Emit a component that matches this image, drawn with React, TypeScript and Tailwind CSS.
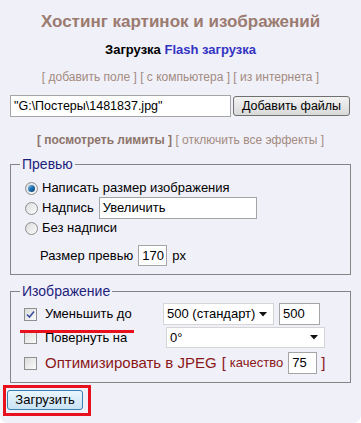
import React from "react";

function Radio({ checked }: { checked?: boolean }) {
  return (
    <span className="flex h-[13px] w-[13px] shrink-0 items-center justify-center rounded-full border border-[#8e8f8f] bg-gradient-to-br from-[#dcdcdc] to-[#fbfbfb]">
      {checked && (
        <span className="h-[7px] w-[7px] rounded-full bg-gradient-to-br from-[#7ec3ee] via-[#1f6fb0] to-[#0b3f73]" />
      )}
    </span>
  );
}

function Check({ checked }: { checked?: boolean }) {
  return (
    <span className="flex h-[13px] w-[13px] shrink-0 items-center justify-center border border-[#8e8f8f] bg-gradient-to-br from-[#dcdcdc] to-[#fbfbfb]">
      {checked && (
        <svg width="9" height="9" viewBox="0 0 9 9">
          <path d="M1 4.5 L3.5 7 L8 1.5" fill="none" stroke="#3a4fa0" strokeWidth="1.6" />
        </svg>
      )}
    </span>
  );
}

function Select({ value, w }: { value: string; w: string }) {
  return (
    <div className={`flex items-center justify-between whitespace-nowrap border border-[#d5d5d5] bg-white pl-[3px] pr-[6px] text-black ${w}`}>
      <span>{value}</span>
      <svg width="8" height="5" viewBox="0 0 8 5">
        <path d="M0 0 H8 L4 4.5 Z" fill="#111" />
      </svg>
    </div>
  );
}

export default function App() {
  return (
    <div className="h-[423px] w-[361px] bg-white font-['Liberation_Sans',Arial,sans-serif] text-[13px] text-black">
      <div className="relative h-full rounded-b-[8px] bg-[#f0f0f9] pt-[12px]">
        <h1 className="h-[20px] text-center text-[17px] font-bold leading-[20px] text-[#9b7b70]">
          Хостинг картинок и изображений
        </h1>
        <div className="mt-[10px] h-[16px] text-center font-bold leading-[16px]">
          Загрузка <span className="text-[#3434c2]">Flash загрузка</span>
        </div>
        <div className="mt-[11px] h-[16px] text-center text-[12px] leading-[16px] text-[#a38b80]">
          [ добавить поле ] [ с компьютера ] [ из интернета ]
        </div>

        <div className="mt-[10px] flex h-[22px] items-center pl-[10px]">
          <div className="flex h-[22px] w-[221px] items-center whitespace-nowrap border border-[#a5a5a5] bg-white pl-[3px] text-[12.5px]">
            "G:\Постеры\1481837.jpg"
          </div>
          <button className="ml-[2px] h-[20px] w-[117px] rounded-[3px] border border-[#707070] bg-gradient-to-b from-[#f3f3f3] to-[#d9d9d9] text-[12.5px] leading-[18px]">
            Добавить файлы
          </button>
        </div>

        <div className="mt-[15px] h-[16px] text-center text-[12px] leading-[16px] text-[#a38b80]">
          <span className="font-bold text-[#8d7469]">[ посмотреть лимиты ]</span> [ отключить все эффекты ]
        </div>

        <fieldset className="mx-[10px] mt-[8px] border border-[#858585] pb-[8px]">
          <legend className="ml-[9px] px-[2px] text-[14px] leading-[16px] text-[#1e1e7c]">Превью</legend>
          <div className="pl-[14px]">
            <div className="mt-[6px] flex h-[20px] items-center gap-[4px]">
              <Radio checked />
              <span>Написать размер изображения</span>
            </div>
            <div className="flex h-[20px] items-center gap-[4px]">
              <Radio />
              <span>Надпись</span>
              <div className="ml-[1px] flex h-[22px] w-[158px] items-center border border-[#a5a5a5] bg-white pl-[3px]">
                Увеличить
              </div>
            </div>
            <div className="flex h-[20px] items-center gap-[4px]">
              <Radio />
              <span>Без надписи</span>
            </div>
            <div className="mt-[7px] flex h-[21px] items-center pl-[15px]">
              <span>Размер превью</span>
              <div className="ml-[5px] flex h-[21px] w-[29px] items-center border border-[#a5a5a5] bg-white pl-[3px]">
                170
              </div>
              <span className="ml-[5px]">px</span>
            </div>
          </div>
        </fieldset>

        <fieldset className="relative mx-[10px] mt-[8px] border border-[#858585] pb-[8px]">
          <legend className="ml-[9px] px-[2px] text-[14px] leading-[16px] text-[#1e1e7c]">Изображение</legend>
          <div className="pl-[13px]">
            <div className="mt-[4px] flex h-[22px] items-center">
              <Check checked />
              <span className="ml-[8px] w-[118px]">Уменьшить до</span>
              <Select value="500 (стандарт)" w="h-[22px] w-[111px]" />
              <div className="ml-[5px] flex h-[22px] w-[41px] items-center border border-[#a5a5a5] bg-white pl-[3px]">
                500
              </div>
            </div>
            <div className="mt-[2px] flex h-[21px] items-center">
              <Check />
              <span className="ml-[8px] w-[121px]">Повернуть на</span>
              <Select value="0°" w="h-[21px] w-[159px]" />
            </div>
            <div className="mt-[4px] flex h-[22px] items-center text-[15px] text-[#8a1717]">
              <Check />
              <span className="ml-[8px] whitespace-nowrap">Оптимизировать в JPEG</span>
              <span className="ml-[5px]">[</span>
              <span className="ml-[4px] text-[13px]">качество</span>
              <div className="ml-[5px] flex h-[22px] w-[29px] items-center border border-[#a5a5a5] bg-white pl-[3px] text-[13px] text-black">
                75
              </div>
              <span className="ml-[4px]">]</span>
            </div>
          </div>
          <div className="absolute left-[9px] top-[31px] h-[3px] w-[114px] bg-[#e8101c]" />
        </fieldset>

        <div className="ml-[3px] mt-[2px] w-[88px] border-[3px] border-[#e8101c] p-[1px] pb-[3px] pt-[2px]">
          <button className="h-[20px] w-[76px] rounded-[3px] border border-[#3c7fb1] bg-gradient-to-b from-[#eaf6fd] to-[#c9e3f4] text-[13px] leading-[18px]">
            Загрузить
          </button>
        </div>
      </div>
    </div>
  );
}
